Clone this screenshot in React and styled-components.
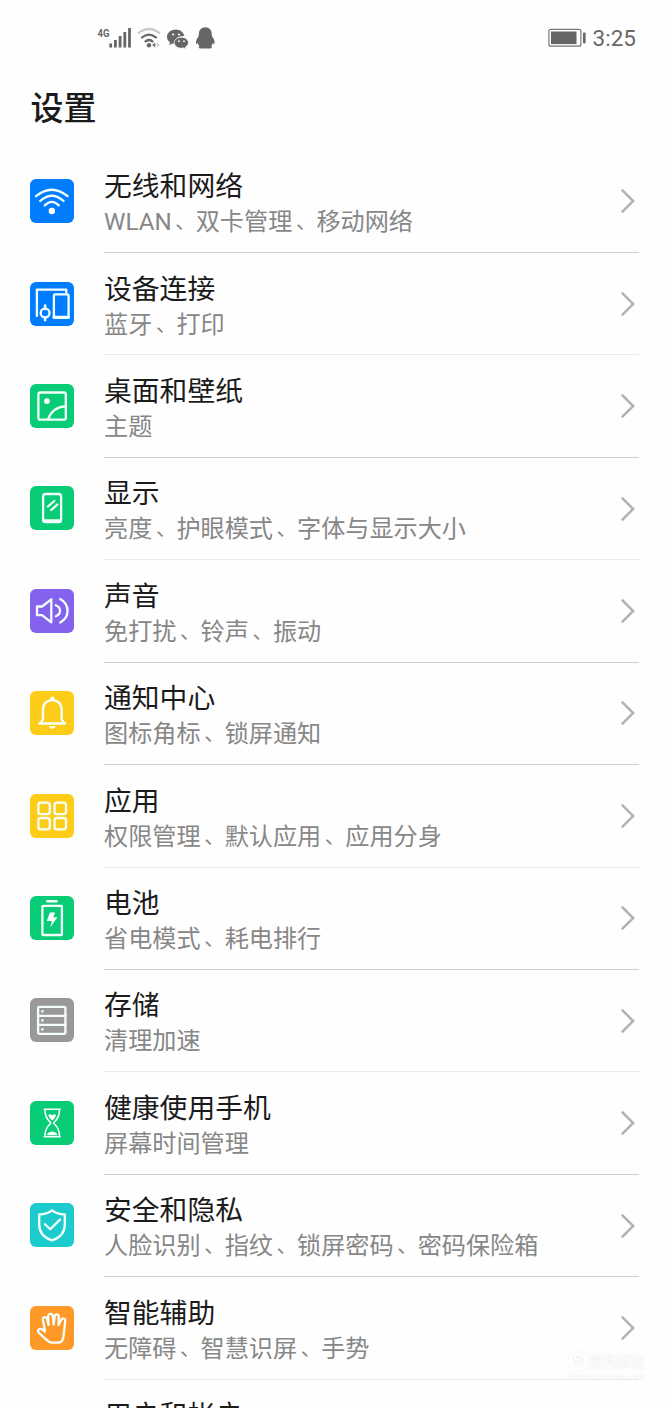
import React from "react";
import styled, { createGlobalStyle } from "styled-components";

const GlobalStyle = createGlobalStyle`
  body {
    margin: 0;
    background: #fefefe;
  }
`;

const Screen = styled.main`
  position: relative;
  box-sizing: border-box;
  height: 1408px;
  overflow: hidden;
  background: #fefefe;
  color: #1b1b1b;
  font-family: Roboto, "Noto Sans CJK SC", sans-serif;
`;

const StatusBar = styled.header`
  display: flex;
  justify-content: space-between;
  align-items: center;
  box-sizing: border-box;
  height: 76px;
  padding: 0 33px 0 97px;
`;

const StatusGroup = styled.div`
  display: flex;
  align-items: center;
  gap: ${(p) => p.$gap}px;
`;

const Clock = styled.span`
  font-size: 22.5px;
  line-height: 26px;
  color: #686868;
`;

const PageTitle = styled.h1`
  box-sizing: border-box;
  margin: 0;
  padding: 2px 0 0 30.5px;
  height: 74.6px;
  font-size: 33px;
  line-height: 62px;
  font-weight: 500;
`;

const List = styled.ul`
  margin: 0;
  padding: 0;
  list-style: none;
`;

const Row = styled.li`
  display: flex;
  align-items: center;
  box-sizing: border-box;
  height: 102.43px;
  padding: 0 30px;
`;

const Tile = styled.span`
  flex: none;
  width: 44px;
  height: 44px;
  margin-bottom: 1.4px;
  border-radius: 6px;
  background: ${(p) => p.$color};
`;

const Glyph = styled.svg`
  display: block;
  flex: none;
`;

const RowBody = styled.div`
  display: flex;
  flex: 1;
  justify-content: space-between;
  align-items: center;
  box-sizing: border-box;
  height: 100%;
  margin-left: 30px;
  padding-right: 2.6px;
  border-bottom: 1px solid ${(p) => (p.$faint ? "#e9e9e9" : "#cfcfcf")};
`;

const Labels = styled.div`
  display: flex;
  flex-direction: column;
  padding-top: 5.6px;
  white-space: nowrap;
`;

const Name = styled.span`
  font-size: 27.8px;
  line-height: 36px;
`;

const Detail = styled.span`
  font-size: 24.15px;
  line-height: 34px;
  color: #878787;
`;

const Comma = styled.span`
  padding-left: 3.6px;
  font-size: 20.5px;
  line-height: 1;
  vertical-align: 1px;
`;

const Watermark = styled.div`
  position: absolute;
  left: 568px;
  top: 1349px;
  display: grid;
  grid-template-columns: 22px auto;
  align-items: center;
  font-size: 13.5px;
  line-height: 24px;
  color: #fff;
  text-shadow: 0 0 2px #ddd;
`;

const WatermarkBadge = styled.span`
  box-sizing: border-box;
  width: 20px;
  height: 20px;
  border: 2px solid #fff;
  border-radius: 50%;
  box-shadow: 0 0 2px #e2e2e2;
  font: bold 16px/16px "Liberation Sans", sans-serif;
  text-align: center;
`;

const WatermarkUrl = styled.small`
  grid-column: 1 / 3;
  font-size: 8px;
  line-height: 8px;
  letter-spacing: 0.8px;
`;

const glyphs = {
  wifi: (
    <>
      <path d="M6 17.2Q21.8 4.3 37.6 17.2M10.2 22Q21.8 11.5 33.6 22M14.8 26.4Q21.8 19.2 28.8 26.4" />
      <circle cx="21.8" cy="32" r="3.2" fill="#fff" stroke="none" />
    </>
  ),
  devices: (
    <>
      <path d="M6.9 34V7.7H36.3V10.5" />
      <rect x="23.9" y="12.4" width="14.7" height="23.5" rx="1.4" />
      <path d="M24 35.2H38.5" strokeWidth="3" />
      <circle cx="15.1" cy="31" r="4.4" />
      <path d="M15.1 23.5V27M15.1 35.5V38.3" strokeWidth="2.6" />
    </>
  ),
  picture: (
    <>
      <rect x="8.4" y="8.5" width="27.4" height="27.2" rx="2" />
      <path d="M18 35.5Q22.5 23 35.5 22.4" />
      <circle cx="17" cy="17.1" r="2.9" fill="#fff" stroke="none" />
    </>
  ),
  display: (
    <>
      <rect x="13.1" y="8" width="18" height="28" rx="2.5" />
      <path d="M14 35H30.3" strokeWidth="3.4" />
      <path d="M17.9 20.5L24.3 15M21.2 24L27.3 18.5" />
    </>
  ),
  sound: (
    <>
      <path d="M7 17.5H12L21.3 10.3V33.4L12 26.2H7Z" />
      <path d="M25.8 16.3C31.4 18.5 31.4 25 25.8 27.2M30.2 10C40 15.2 40 28.3 30.2 33.5" />
    </>
  ),
  bell: (
    <>
      <path d="M9.2 32.5H35.2M10.5 31.8L13 28.6V18.5C13 5.8 31.6 5.8 31.6 18.5V28.6L34 31.8" />
      <circle cx="22.3" cy="7.4" r="1.9" fill="#fff" stroke="none" />
      <path d="M18.7 35.2H26Q22.3 41 18.7 35.2Z" fill="#fff" stroke="none" />
    </>
  ),
  apps: (
    <>
      <rect x="8.4" y="8.7" width="11.4" height="11.4" rx="2.4" />
      <rect x="24.6" y="8.7" width="11.4" height="11.4" rx="2.4" />
      <rect x="8.4" y="24" width="11.4" height="11.4" rx="2.4" />
      <rect x="24.6" y="24" width="11.4" height="11.4" rx="2.4" />
    </>
  ),
  battery: (
    <>
      <rect x="12.4" y="9.8" width="19.5" height="29.2" rx="0.8" />
      <path d="M17.3 5.3H26.5" strokeWidth="2.4" />
      <path
        d="M19.9 16.5H25L23.3 21.3H27.5L20.2 31.6L21.9 25H16.8Z"
        fill="#fff"
        stroke="none"
      />
    </>
  ),
  storage: (
    <>
      <rect x="8.1" y="8.8" width="27.3" height="27" rx="1.2" />
      <path d="M8 17.8H35.5M8 26.8H35.5" />
      <path d="M12.4 12.2V14.4M12.4 21.2V23.4M12.4 30.2V32.4" strokeLinecap="butt" />
    </>
  ),
  hourglass: (
    <>
      <path
        d="M14.2 8.3H30.2M14.2 35.7H30.2M15 8.7C14.5 14.5 16.6 17.8 20.8 22C16.6 26.2 14.5 29.5 15 35.3M29.4 8.7C29.9 14.5 27.8 17.8 23.6 22C27.8 26.2 29.9 29.5 29.4 35.3"
        strokeWidth="1.6"
      />
      <path
        d="M18.5 13.8Q20.5 12.3 22.2 14.5Q24 12.3 25.9 13.8C26.3 16 24 17.7 22.2 19.6C20.4 17.7 18.1 16 18.5 13.8ZM17 34.2Q17.4 31 22.2 30.4Q27 31 27.4 34.2Z"
        fill="#fff"
        stroke="none"
      />
    </>
  ),
  shield: (
    <>
      <path d="M22 7.3Q26.5 11 34.8 11.4V21.5C34.8 30 29.2 35 22 37.3C14.8 35 9.2 30 9.2 21.5V11.4Q17.5 11 22 7.3Z" />
      <path d="M15 21.2L20.2 26.3L30 16.6" />
    </>
  ),
  hand: (
    <path d="M14.8 25.5V24L12.9 13.7C12.5 10.7 16.3 10.1 17.1 12.9L18.5 19L18.2 10.3C18.2 7.1 22.4 6.9 22.8 10L23.6 18.5L24.8 10.1C25.2 7.4 28.9 7.9 28.7 10.7L28.6 19L31 14C32 11.5 35.6 12.2 35.2 15L34.2 24.5L33.2 32C32.4 35.2 31 36.6 28.5 36.6H21.5C18.2 36.1 16.8 33.6 14.4 31.8L9.2 27.2C6.6 24.8 9 21.8 11.8 23.3Z" />
  ),
};

const SettingIcon = ({ name }) => (
  <Glyph
    width="44"
    height="44"
    viewBox="0 0 44 44"
    fill="none"
    stroke="#f4fffb"
    strokeWidth="2.3"
    strokeLinecap="round"
    strokeLinejoin="round"
  >
    {glyphs[name]}
  </Glyph>
);

const Chevron = () => (
  <Glyph width="16" height="26" viewBox="0 0 16 26" fill="none" stroke="#b2b2b2" strokeWidth="2.5">
    <path d="M2.5 2.4L13.2 13L2.5 23.6" strokeLinecap="round" />
  </Glyph>
);

const SignalIcons = () => (
  <Glyph width="120" height="26" viewBox="97 25 120 26" fill="#666">
    <text x="97.5" y="36.5" fontSize="11.5" fontWeight="700" textLength="12" lengthAdjust="spacingAndGlyphs">
      4G
    </text>
    <path d="M109.3 43.5h2.8v4h-2.8zM114 40h2.8v7.5h-2.8zM118.7 36h2.8v11.5h-2.8zM123.4 32h2.8v15.5h-2.8zM128.1 28h2.8v19.5h-2.8z" />
    <g fill="none" strokeWidth="2.2">
      <path d="M138 33.5Q149 24.5 160 33.5" stroke="#c9c9c9" />
      <path d="M141.3 38Q149 31.2 156.7 38M144.8 42Q149 38 153.2 42" stroke="#666" />
    </g>
    <circle cx="149" cy="45.3" r="2.2" />
    <path d="M155.2 42.4v5.2l-3-2.6z" />
    <path d="M156.6 42.2v5.6l3.2-2.8z" fill="#cfcfcf" />
    <path d="M176 29.5c-5 0-9 3.2-9 7.3 0 2.3 1.2 4.3 3.1 5.6l-.8 2.8 3.1-1.7 2.6.4c-.6-5 3.6-8.2 9.4-7.8-.8-3.8-4.2-6.6-8.4-6.6z" />
    <path d="M181.4 37.2c-4.1 0-7.2 2.5-7.2 5.6s3.1 5.5 7.2 5.5l2.3-.4 2.5 1.4-.7-2.3c1.8-1 3-2.5 3-4.2 0-3.1-3.1-5.6-7.1-5.6z" stroke="#fefefe" strokeWidth=".8" />
    <g fill="#fefefe">
      <circle cx="173.2" cy="34.5" r="1.1" />
      <circle cx="179" cy="34.5" r="1.1" />
      <circle cx="179" cy="41.2" r=".9" />
      <circle cx="184" cy="41.2" r=".9" />
    </g>
    <path d="M205.3 27.2c-4.2 0-6.4 3-6.4 6.5 0 1.2-.2 2-.5 2.7-1.6 2.2-2.5 4.4-2.4 6.4.1 1.7.8 1.6 1.8.1.4 1.5 1 2.5 1.8 3.3-1.5.6-1.2 2.4 1.4 2.4h8.6c2.6 0 2.9-1.8 1.4-2.4.8-.8 1.4-1.8 1.8-3.3 1 1.5 1.7 1.6 1.8-.1.1-2-.8-4.2-2.4-6.4-.3-.7-.5-1.5-.5-2.7 0-3.5-2.2-6.5-6.4-6.5z" />
  </Glyph>
);

const BatteryLevel = () => (
  <Glyph width="38" height="20" viewBox="0 0 38 20" fill="#666">
    <rect x=".9" y="1.4" width="32" height="16.8" rx="2" fill="none" stroke="#777" strokeWidth="1.2" />
    <rect x="3" y="3.5" width="25.5" height="12.6" />
    <rect x="35" y="4.4" width="2.6" height="11" rx=".8" />
  </Glyph>
);

const settings = [
  { icon: "wifi", color: "#007dff", name: "无线和网络", details: ["WLAN", "双卡管理", "移动网络"] },
  { icon: "devices", color: "#007dff", name: "设备连接", details: ["蓝牙", "打印"], faint: true },
  { icon: "picture", color: "#08cc76", name: "桌面和壁纸", details: ["主题"] },
  { icon: "display", color: "#08cc76", name: "显示", details: ["亮度", "护眼模式", "字体与显示大小"], faint: true },
  { icon: "sound", color: "#8562ee", name: "声音", details: ["免打扰", "铃声", "振动"] },
  { icon: "bell", color: "#fdcc18", name: "通知中心", details: ["图标角标", "锁屏通知"] },
  { icon: "apps", color: "#fdcc18", name: "应用", details: ["权限管理", "默认应用", "应用分身"], faint: true },
  { icon: "battery", color: "#08cc76", name: "电池", details: ["省电模式", "耗电排行"] },
  { icon: "storage", color: "#999999", name: "存储", details: ["清理加速"], faint: true },
  { icon: "hourglass", color: "#08cc76", name: "健康使用手机", details: ["屏幕时间管理"] },
  { icon: "shield", color: "#1ccbcb", name: "安全和隐私", details: ["人脸识别", "指纹", "锁屏密码", "密码保险箱"] },
  { icon: "hand", color: "#fe9827", name: "智能辅助", details: ["无障碍", "智慧识屏", "手势"], faint: true },
  { icon: null, color: "transparent", name: "用户和帐户", details: ["\u00a0"] },
];

export default function App() {
  return (
    <Screen lang="zh-CN">
      <GlobalStyle />
      <StatusBar>
        <StatusGroup $gap={0}>
          <SignalIcons />
        </StatusGroup>
        <StatusGroup $gap={7}>
          <BatteryLevel />
          <Clock>3:25</Clock>
        </StatusGroup>
      </StatusBar>
      <PageTitle>设置</PageTitle>
      <List>
        {settings.map((item) => (
          <Row key={item.name}>
            <Tile $color={item.color}>{item.icon && <SettingIcon name={item.icon} />}</Tile>
            <RowBody $faint={item.faint}>
              <Labels>
                <Name>{item.name}</Name>
                <Detail>
                  {item.details.map((part, i) => (
                    <React.Fragment key={part}>
                      {i > 0 && <Comma>、</Comma>}
                      {part}
                    </React.Fragment>
                  ))}
                </Detail>
              </Labels>
              <Chevron />
            </RowBody>
          </Row>
        ))}
      </List>
      <Watermark>
        <WatermarkBadge>S</WatermarkBadge>
        <span>搜狗指南</span>
        <WatermarkUrl>zhinan.sogou.com</WatermarkUrl>
      </Watermark>
    </Screen>
  );
}
